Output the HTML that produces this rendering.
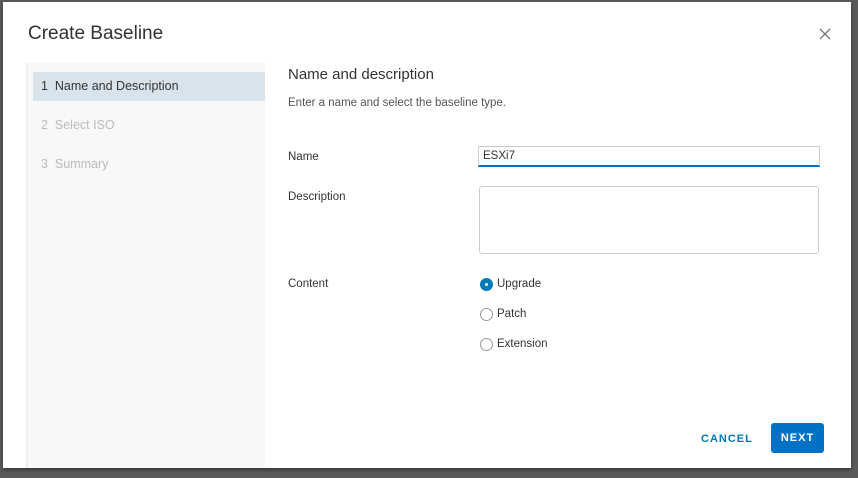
<!DOCTYPE html>
<html><head><style>
body{margin:0;width:858px;height:478px;background:#5a5a5a;position:relative;overflow:hidden;font-family:"Liberation Sans",sans-serif;}
.dlg{position:absolute;left:3px;top:2px;width:848px;height:466px;background:#fff;box-shadow:0 2px 4px rgba(0,0,0,.4);}
.a{position:absolute;}
.t{font-size:19px;color:#333;}
.nav{left:23px;top:61px;width:237px;height:405px;background:#f8f8f8;border-left:2px solid #eee;}
.sel{left:30px;top:70px;width:232px;height:29px;background:#d8e3ec;}
.step{font-size:12.5px;color:#bbb;}
.lbl{font-size:11.5px;color:#333;}
.radio{width:11px;height:11px;border:1px solid #999;border-radius:50%;background:#fff;}
</style></head><body>
<div class="dlg">
<div class="a t" style="left:25px;top:21px">Create Baseline</div>
<svg class="a" style="left:816px;top:26px" width="12" height="12"><path d="M1 1L11 11M11 1L1 11" stroke="#777" stroke-width="1.3"/></svg>
<div class="a nav"></div>
<div class="a sel"></div>
<div class="a step" style="left:38px;top:77px;color:#333">1&nbsp;&nbsp;Name and Description</div>
<div class="a step" style="left:38px;top:116px">2&nbsp;&nbsp;Select ISO</div>
<div class="a step" style="left:38px;top:155px">3&nbsp;&nbsp;Summary</div>
<div class="a" style="left:285px;top:64px;font-size:15px;color:#333">Name and description</div>
<div class="a" style="left:285px;top:95px;font-size:11.5px;color:#555">Enter a name and select the baseline type.</div>
<div class="a lbl" style="left:285px;top:149px">Name</div>
<div class="a lbl" style="left:285px;top:189px">Description</div>
<div class="a lbl" style="left:285px;top:276px">Content</div>
<div class="a" style="left:475px;top:144px;width:336px;height:18px;border:1px solid #ccc;border-bottom:2px solid #0072c6;font-size:11.5px;color:#333;line-height:18px;padding-left:4px">ESXi7</div>
<div class="a" style="left:476px;top:184px;width:338px;height:66px;border:1px solid #ccc;border-radius:3px"></div>
<div class="a radio" style="left:477px;top:276px;background:#0079b8;border-color:#0079b8"><div class="a" style="left:4px;top:4px;width:3px;height:3px;background:#fff;border-radius:50%"></div></div>
<div class="a lbl" style="left:494px;top:276px">Upgrade</div>
<div class="a radio" style="left:477px;top:306px"></div>
<div class="a lbl" style="left:494px;top:306px">Patch</div>
<div class="a radio" style="left:477px;top:336px"></div>
<div class="a lbl" style="left:494px;top:336px">Extension</div>
<div class="a" style="left:698px;top:431px;font-size:11px;font-weight:bold;letter-spacing:1px;color:#0079b8">CANCEL</div>
<div class="a" style="left:768px;top:421px;width:53px;height:30px;background:#0072c6;border-radius:3px;color:#fff;font-size:11px;font-weight:bold;letter-spacing:1px;text-align:center;line-height:31px">NEXT</div>
</div>
</body></html>
